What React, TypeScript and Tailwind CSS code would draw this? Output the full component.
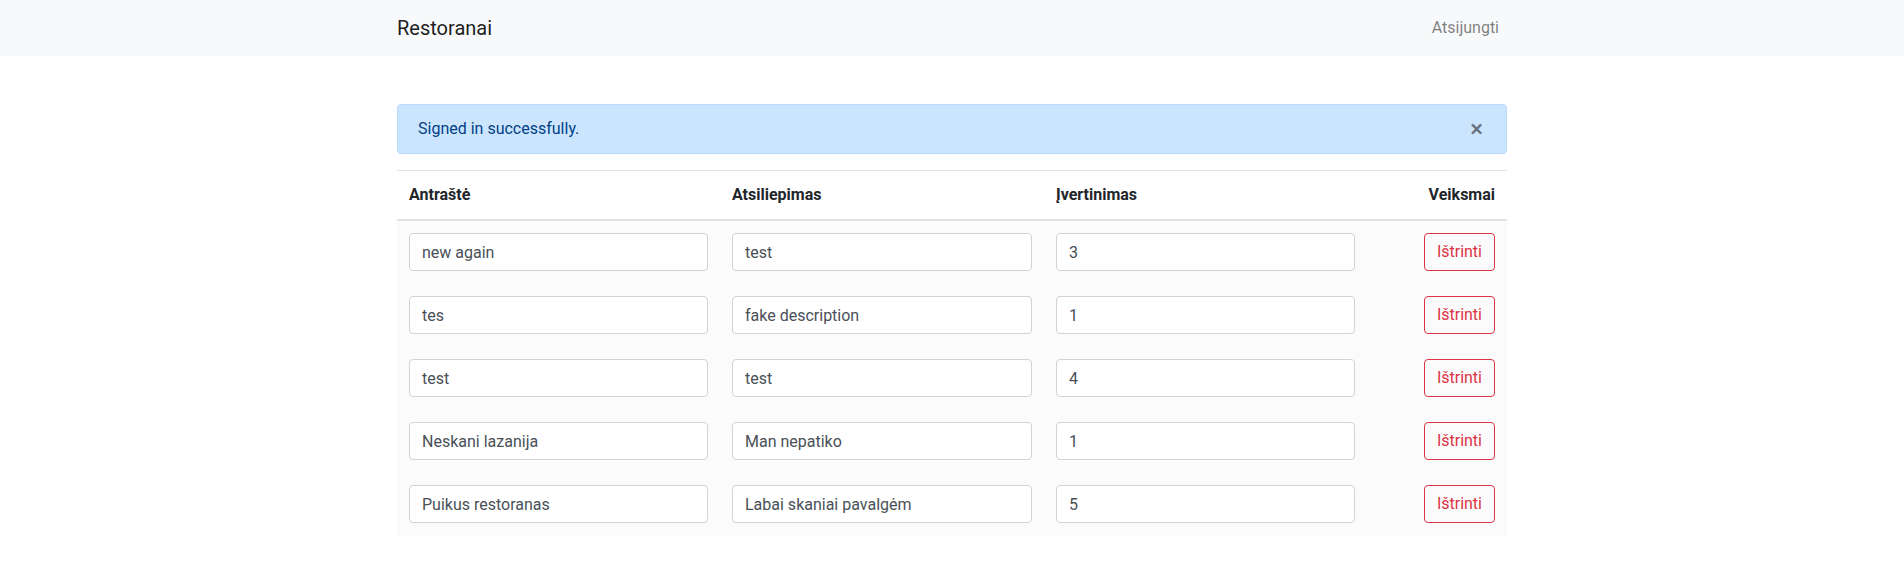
import { useState } from 'react';

interface Review {
  title: string;
  body: string;
  rating: string;
}

const reviews: Review[] = [
  { title: 'new again', body: 'test', rating: '3' },
  { title: 'tes', body: 'fake description', rating: '1' },
  { title: 'test', body: 'test', rating: '4' },
  { title: 'Neskani lazanija', body: 'Man nepatiko', rating: '1' },
  { title: 'Puikus restoranas', body: 'Labai skaniai pavalgėm', rating: '5' },
];

function Field({ value }: { value: string }) {
  return (
    <input
      defaultValue={value}
      className="block h-[38px] w-full rounded-[4px] border border-[#ced4da] bg-white px-3 text-base text-[#495057] outline-none"
    />
  );
}

export default function App() {
  const [showAlert, setShowAlert] = useState(true);

  return (
    <div className="min-h-[583px] bg-white font-['Roboto',sans-serif] text-base text-[#212529]">
      {/* Navbar */}
      <nav className="h-14 bg-[#f8f9fa] px-4">
        <div className="mx-auto flex h-full w-[1110px] items-center justify-between">
          <span className="text-xl text-black/90">Restoranai</span>
          <a className="px-2 text-black/50">Atsijungti</a>
        </div>
      </nav>

      <main className="mx-auto w-[1110px] pt-12">
        {showAlert && (
          <div className="mb-4 flex h-[50px] items-center justify-between rounded-[4px] border border-[#b8daff] bg-[#cce5ff] pl-5 text-[#004085]">
            <span>Signed in successfully.</span>
            <button
              onClick={() => setShowAlert(false)}
              className="pr-[23px] pl-5 text-2xl font-medium leading-none text-black/50"
            >
              ×
            </button>
          </div>
        )}

        {/* Reviews table */}
        <div className="grid grid-cols-[323px_324px_323px_1fr] border-t border-[#dee2e6]">
          <div className="border-b-2 border-[#dee2e6] p-3 font-bold">Antraštė</div>
          <div className="border-b-2 border-[#dee2e6] p-3 font-bold">Atsiliepimas</div>
          <div className="border-b-2 border-[#dee2e6] p-3 font-bold">Įvertinimas</div>
          <div className="border-b-2 border-[#dee2e6] p-3 text-right font-bold">Veiksmai</div>
        </div>
        <div className="bg-[#fbfbfb]">
          {reviews.map((r, i) => (
            <div key={i} className="grid h-[63px] grid-cols-[323px_324px_323px_1fr] items-start">
              <div className="p-3"><Field value={r.title} /></div>
              <div className="p-3"><Field value={r.body} /></div>
              <div className="p-3"><Field value={r.rating} /></div>
              <div className="flex justify-end p-3">
                <button className="h-[38px] rounded-[4px] border border-[#dc3545] px-3 text-[#dc3545]">
                  Ištrinti
                </button>
              </div>
            </div>
          ))}
        </div>
      </main>
    </div>
  );
}
